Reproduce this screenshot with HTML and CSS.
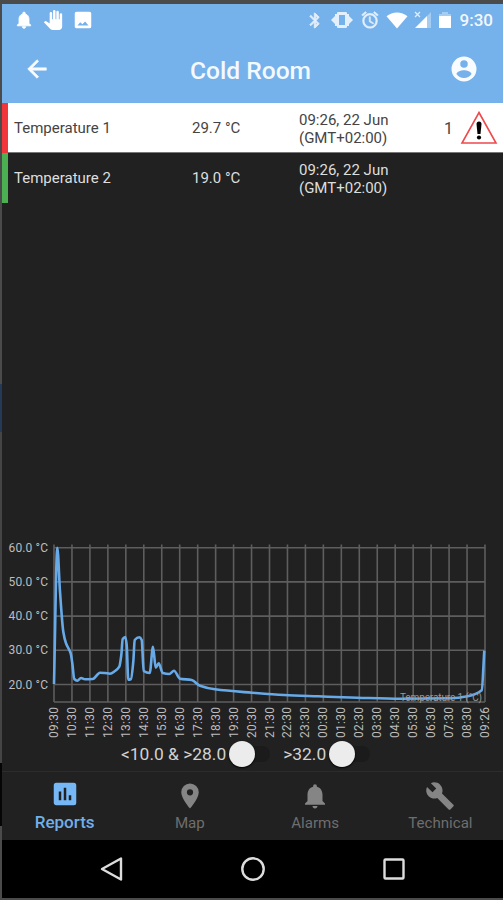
FILE: index.html
```html
<!DOCTYPE html>
<html lang="en">
<head>
    <meta charset="UTF-8">
    <meta name="viewport" content="width=device-width, initial-scale=1.0">
    <title>Cold Room</title>
    <link rel="stylesheet" href="styles.css">
</head>
<body>
    <div class="screen">
        <!-- Status bar -->
        <div class="status-bar">
            <div class="status-left">
                <svg width="20" height="20" viewBox="0 0 24 24"><path d="M12 22c1.100 0 2-.9 2-2h-4c0 1.100.9 2 2 2zm6-6v-5c0-3.070-1.640-5.640-4.500-6.320V4a1.500 1.500 0 0 0-3 0v.68C7.630 5.360 6 7.920 6 11v5l-2 2v1h16v-1z" stroke-width="1"/></svg>
                <svg width="20" height="20" viewBox="0 0 24 24"><path d="M23 5.500V20c0 2.200-1.800 4-4 4h-7.300c-1.080 0-2.100-.43-2.850-1.190L1 14.830s1.260-1.230 1.300-1.250c.22-.19.49-.29.79-.29.22 0 .42.060.6.160.04.010 4.310 2.460 4.310 2.460V4a1.500 1.500 0 0 1 3 0v7h1V1.500a1.500 1.500 0 0 1 3 0V11h1V2.500a1.500 1.500 0 0 1 3 0V11h1V5.500a1.500 1.500 0 0 1 3 0z"/></svg>
                <svg width="22" height="22" viewBox="0 0 24 24"><path d="M21 19V5a2 2 0 0 0-2-2H5a2 2 0 0 0-2 2v14c0 1.100.9 2 2 2h14a2 2 0 0 0 2-2zM6 18l3-3.500 2.300 2 3-3 3.700 4.500z"/></svg>
            </div>
            <div class="status-right">
                <svg class="dim" width="18" height="19" viewBox="0 0 24 24"><path d="M17.710 7.710 12 2h-1v7.590L6.410 5 5 6.410 10.590 12 5 17.590 6.410 19 11 14.410V22h1l5.710-5.710-4.300-4.290zM13 5.830l1.880 1.880L13 9.590zm1.880 10.460L13 18.170v-3.760z" stroke-width="1"/></svg>
                <svg class="dim" width="24" height="18" viewBox="0 0 24 18"><path fill-rule="evenodd" d="M8 1h8q1 0 1 1v1h2v2l4 4-4 4v2h-2v1q0 1-1 1H8q-1 0-1-1v-1H5v-2L1 9l4-4V3h2V2q0-1 1-1zm1 3v10h6V4z"/></svg>
                <svg class="dim" width="20" height="20" viewBox="0 0 24 24"><path d="m22 5.720-4.600-3.860-1.290 1.530 4.600 3.860zM7.880 3.390 6.600 1.860 2 5.710l1.290 1.530zM12.500 8H11v6l4.750 2.850.75-1.230-4-2.370zM12 4a9 9 0 1 0 0 18 9 9 0 0 0 0-18zm0 16a7 7 0 1 1 0-14 7 7 0 0 1 0 14z" stroke-width=".6"/></svg>
                <svg width="22" height="17" viewBox="0 0 22 17"><path d="M11 16.500.5 4.200C3.500 1.900 7 .5 11 .5s7.500 1.400 10.500 3.700z"/></svg>
                <svg width="18" height="18" viewBox="0 0 18 18"><path d="M1 17 13 5v12z"/><path class="faint" d="m13 5 4-4v16h-4z"/><path class="dim" d="m1 1 5 5M6 1 1 6" stroke-width="1.200"/></svg>
                <svg width="14" height="18" viewBox="0 0 14 18"><path class="faint" d="M1 3h3V1h6v2h3v3H1z"/><path d="M1 5h12v12H1z"/></svg>
                <span class="clock">9:30</span>
            </div>
        </div>

        <!-- Title bar -->
        <header class="title-bar">
            <svg width="28" height="28" viewBox="0 0 24 24"><path d="M20 11H7.830l5.590-5.590L12 4l-8 8 8 8 1.410-1.410L7.830 13H20z" stroke-width=".5"/></svg>
            <h1>Cold Room</h1>
            <svg width="30" height="30" viewBox="0 0 24 24"><path d="M12 2a10 10 0 1 0 0 20 10 10 0 0 0 0-20zm0 3a3 3 0 1 1 0 6 3 3 0 0 1 0-6zm0 14.200a7.200 7.200 0 0 1-6-3.220c.03-1.990 4-3.080 6-3.080s5.970 1.090 6 3.080a7.200 7.200 0 0 1-6 3.220z"/></svg>
        </header>

        <!-- Sensors -->
        <div class="sensor alarm">
            <span>Temperature 1</span>
            <span>29.7 °C</span>
            <span class="time">09:26, 22 Jun<br>(GMT+02:00)</span>
            <span class="count">1</span>
            <svg width="38" height="34" viewBox="0 0 38 34"><path class="triangle" d="M19 1.500 36 32H2z"/><path d="M16.500 13q0-2.500 2.500-2.500t2.500 2.500l-1 10h-3z"/><circle cx="19" cy="26.500" r="2.100"/></svg>
        </div>
        <div class="sensor ok">
            <span>Temperature 2</span>
            <span>19.0 °C</span>
            <span class="time">09:26, 22 Jun<br>(GMT+02:00)</span>
        </div>

        <!-- Chart -->
        <div class="chart-area">
            <svg id="chart" width="501" height="200" viewBox="0 0 501 200"></svg>
            <div class="switches">
                <span>&lt;10.0 &amp; &gt;28.0</span>
                <i class="switch"></i>
                <span>&gt;32.0</span>
                <i class="switch"></i>
            </div>
        </div>

        <!-- Tabs -->
        <nav class="tabs">
            <div class="tab active">
                <svg width="30" height="30" viewBox="0 0 24 24"><path d="M19 3H5a2 2 0 0 0-2 2v14c0 1.100.9 2 2 2h14a2 2 0 0 0 2-2V5a2 2 0 0 0-2-2zM9 17H7v-7h2zm4 0h-2V7h2zm4 0h-2v-4h2z"/></svg>
                <span>Reports</span>
            </div>
            <div class="tab">
                <svg width="30" height="30" viewBox="0 0 24 24"><path d="M12 2a7 7 0 0 0-7 7c0 5.250 7 13 7 13s7-7.750 7-13a7 7 0 0 0-7-7zm0 9.500a2.500 2.500 0 1 1 0-5 2.500 2.500 0 0 1 0 5z"/></svg>
                <span>Map</span>
            </div>
            <div class="tab">
                <svg width="30" height="30" viewBox="0 0 24 24"><path d="M12 22c1.100 0 2-.9 2-2h-4c0 1.100.9 2 2 2zm6-6v-5c0-3.070-1.640-5.640-4.500-6.320V4a1.500 1.500 0 0 0-3 0v.68C7.630 5.360 6 7.920 6 11v5l-2 2v1h16v-1z"/></svg>
                <span>Alarms</span>
            </div>
            <div class="tab">
                <svg width="30" height="30" viewBox="0 0 24 24"><path d="m22.700 19-9.100-9.100c.9-2.300.4-5-1.500-6.900-2-2-5-2.400-7.400-1.300L9 6 6 9 1.600 4.700C.4 7.100.9 10.100 2.900 12.100c1.900 1.900 4.600 2.400 6.900 1.500l9.100 9.100c.4.4 1 .4 1.400 0l2.300-2.300c.5-.4.5-1.100.1-1.400z"/></svg>
                <span>Technical</span>
            </div>
        </nav>

        <!-- System buttons -->
        <div class="nav-bar">
            <svg width="26" height="26" viewBox="0 0 26 26"><path d="M22 2.500v21L3 13z"/></svg>
            <svg width="26" height="26" viewBox="0 0 26 26"><circle cx="13" cy="13" r="10.700"/></svg>
            <svg width="26" height="26" viewBox="0 0 26 26"><rect x="3.500" y="3.500" width="19" height="19" rx="1"/></svg>
        </div>
    </div>
    <script src="chart.js"></script>
</body>
</html>
```
FILE: styles.css
```css
* {
    box-sizing: border-box;
}
body {
    margin: 0;
    height: 900px;
    padding: 4px 0 2px 2px;
    font-family: Roboto, "Liberation Sans", sans-serif;
    background: linear-gradient(#4b4b4b 0 384px, #253a56 384px 432px, #454545 432px 763px, #050505 763px 826px, #4b4b4b 826px);
    overflow: hidden;
}
.screen {
    display: flex;
    flex-direction: column;
    height: 894px;
    background: #212121;
}
svg {
    display: block;
    flex: none;
}
.status-bar {
    display: flex;
    justify-content: space-between;
    height: 33px;
    padding: 0 10px 1px 12px;
    background: #75b1ea;
    color: #fff;
    fill: #fff;
}
.status-left, .status-right {
    display: flex;
    align-items: center;
}
.status-left {
    gap: 9px;
}
.status-right {
    gap: 6px;
}
.status-bar path[stroke-width], .title-bar path[stroke-width] {
    stroke: #fff;
}
.dim {
    opacity: 0.8;
}
.faint {
    opacity: 0.35;
}
.clock {
    margin-left: 2px;
    font-size: 17px;
    font-weight: 500;
    opacity: 0.9;
}
.title-bar {
    display: flex;
    align-items: center;
    justify-content: space-between;
    height: 66px;
    padding: 0 24px 2px 21px;
    background: #75b1ea;
    color: #f4f9ff;
    fill: #f8fbff;
}
h1 {
    margin: 2px 0 0 1px;
    font-size: 24.6px;
    font-weight: 500;
}
.sensor {
    display: grid;
    grid-template-columns: 178px 107px 136px 25px 40px;
    align-items: center;
    height: 50px;
    padding-left: 6px;
    border-left: 6px solid #4bb051;
    font-size: 15px;
    color: #dedede;
}
.sensor.alarm {
    border-left-color: #f0353b;
    background: #fff;
    color: #444;
    box-shadow: inset 0 -1px #777;
}
.time {
    padding-top: 1px;
    line-height: 18px;
}
.count {
    padding-left: 9px;
    font-size: 16px;
}
.triangle {
    fill: none;
    stroke: #ee4a4d;
    stroke-width: 1.6;
}
.chart-area {
    flex: 1;
    display: flex;
    flex-direction: column;
    justify-content: flex-end;
}
#chart text {
    font-size: 12px;
    fill: #bdbdbd;
}
#chart .legend {
    font-size: 10px;
    fill: #999;
}
.grid {
    stroke: #5e5e5e;
    stroke-width: 1.6;
}
.line {
    fill: none;
    stroke: #68aae8;
    stroke-width: 2.6;
    stroke-linejoin: round;
}
.switches {
    display: flex;
    align-items: center;
    height: 31px;
    padding: 0 0 3px 119px;
    font-size: 17.4px;
    color: #d2d2d2;
}
.switch {
    position: relative;
    width: 38px;
    height: 16px;
    margin: 0 13px 0 6px;
    border-radius: 8px;
    background: #1b1b1b;
}
.switch::before {
    content: "";
    position: absolute;
    top: -5px;
    left: -3px;
    width: 26px;
    height: 26px;
    border-radius: 50%;
    background: #ececec;
    box-shadow: 0 1px 2px #000;
}
.tabs {
    display: flex;
    height: 69px;
    border-top: 1px solid #2c2c2c;
}
.tab {
    flex: 1;
    display: flex;
    flex-direction: column;
    align-items: center;
    padding-top: 9px;
    font-size: 15.1px;
    line-height: 24px;
    color: #6e6e6e;
    fill: #858585;
}
.tab.active {
    font-size: 17px;
    font-weight: 500;
    color: #70afe9;
    fill: #75b8f5;
}
.tab.active svg {
    margin-top: -2px;
    margin-bottom: 1px;
}
.nav-bar {
    display: flex;
    justify-content: center;
    gap: 115px;
    height: 58px;
    padding-top: 16px;
    background: #000;
    fill: none;
    stroke: #ddd;
    stroke-width: 2.4;
    stroke-linejoin: round;
}
```
FILE: chart.js
```js
const chart = document.getElementById('chart');
const left = 52, right = 483, top60 = 7.7, bottom = 162;
const step = (right - left) / 24;

const points = [
    [52, 144], [55.3, 7.7], [58, 51.7], [61.3, 91.7], [64, 103.3], [68.7, 113.3],
    [70.3, 123.3], [72.3, 139], [75.3, 140.7], [79, 138], [83, 139.3], [90.7, 139],
    [98, 132.7], [103, 133], [108, 133.7], [113, 131], [117.3, 126.7], [119.3, 115],
    [120.7, 99], [123.3, 97], [124.7, 105], [126.3, 139.7], [129, 139], [131.3, 121.7],
    [132.7, 100], [137.3, 97.3], [139.7, 100], [141.7, 131], [147.7, 133], [151, 106.7],
    [153.7, 127.7], [156.7, 123.3], [160.7, 133], [167.3, 134], [172, 130.7], [178, 138.7],
    [189.7, 140], [198, 145.7], [213, 149.3], [250, 152.7], [282, 155], [316, 156.3],
    [355.7, 157.7], [399, 158.7], [449, 158.3], [465.7, 156.3], [479.7, 150.3], [482.3, 110.7]
];

// horizontal-tangent bezier between neighbours where the slope turns, straight-ish elsewhere
function smooth(pts) {
    const slope = pts.map((p, i) => {
        if (i === 0 || i === pts.length - 1) return null;
        const a = (p[1] - pts[i - 1][1]) / (p[0] - pts[i - 1][0]);
        const b = (pts[i + 1][1] - p[1]) / (pts[i + 1][0] - p[0]);
        return a * b <= 0 ? 0 : 2 * a * b / (a + b);
    });
    let d = `M${pts[0]}`;
    for (let i = 1; i < pts.length; i++) {
        const [x0, y0] = pts[i - 1], [x1, y1] = pts[i];
        const h = (x1 - x0) / 3;
        const m = (y1 - y0) / (x1 - x0);
        const s0 = slope[i - 1] ?? m, s1 = slope[i] ?? m;
        d += `C${x0 + h} ${y0 + s0 * h} ${x1 - h} ${y1 - s1 * h} ${x1} ${y1}`;
    }
    return d;
}

let out = '';

// temperature rows
for (let i = 0; i < 5; i++) {
    const y = top60 + i * 34.2;
    out += `<path class="grid" d="M${left} ${y}H${right}"/>`;
    out += `<text x="46" y="${y + 4}" text-anchor="end" textLength="39.5">${60 - i * 10}.0 °C</text>`;
}
out += `<path class="grid" d="M${left} ${bottom}H${right}"/>`;

// hour columns
for (let i = 0; i <= 24; i++) {
    const x = left + i * step;
    const label = i === 24 ? '09:26' : String((9 + i) % 24).padStart(2, '0') + ':30';
    out += `<path class="grid" d="M${x} 4.500V${bottom}"/>`;
    out += `<text transform="translate(${x + 4} 198) rotate(-90)" textLength="31">${label}</text>`;
}

out += `<path class="line" d="${smooth(points)}"/>`;
out += '<text class="legend" x="398" y="161" textLength="82">Temperature 1 (°C)</text>';
chart.innerHTML = out;
```
